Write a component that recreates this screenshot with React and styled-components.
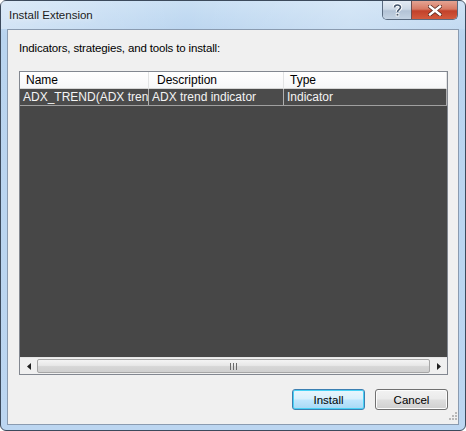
import styled, { createGlobalStyle } from 'styled-components';

const Global = createGlobalStyle`
  html, body {
    margin: 0;
    padding: 0;
    background: #ffffff;
  }
  * { box-sizing: border-box; }
`

const Window = styled.div`
  width: 466px;
  height: 431px;
  border: 1px solid #3c4a5c;
  border-radius: 6px;
  background: linear-gradient(180deg, #c9dff4 0%, #b9d4ef 8%, #bcd6f1 100%);
  display: flex;
  flex-direction: column;
  padding: 0 6px 5px 6px;
  font-family: "Liberation Sans", Arial, sans-serif;
`

const TitleBar = styled.div`
  height: 28px;
  display: flex;
  align-items: flex-start;
  background: linear-gradient(90deg, rgba(255,255,255,0.35) 0%, rgba(255,255,255,0) 40%, rgba(255,255,255,0.25) 75%, rgba(255,255,255,0.1) 100%);
  margin: 0 -6px;
  padding: 0 7px 0 8px;
`

const Title = styled.div`
  font-size: 11.5px;
  color: #1b1b1b;
  margin-top: 8px;
  text-shadow: 0 0 6px rgba(255,255,255,0.9);
`

const Caption = styled.div`
  margin-left: auto;
  display: flex;
  height: 19px;
  border: 1px solid #5a6b80;
  border-top: none;
  border-radius: 0 0 5px 5px;
  overflow: hidden;
`

const CapButton = styled.div`
  width: ${p => p.$w}px;
  display: flex;
  align-items: center;
  justify-content: center;
  background: ${p => p.$close
    ? 'linear-gradient(180deg, #e4a493 0%, #d77a64 45%, #c2412a 55%, #d35b3e 100%)'
    : 'linear-gradient(180deg, #e3ebf4 0%, #cdd9e6 45%, #b3c3d6 55%, #c4d3e3 100%)'};
  border-left: ${p => p.$close ? '1px solid #6e5050' : 'none'};
`

const Client = styled.div`
  flex: 1;
  border: 1px solid #8a9bb0;
  background: #f0f0f0;
  display: flex;
  flex-direction: column;
  padding: 11px 10px 0 11px;
`

const Label = styled.div`
  font-size: 11.5px;
  color: #000000;
  line-height: 15px;
  height: 15px;
  letter-spacing: -0.15px;
`

const ListBox = styled.div`
  margin-top: 15px;
  height: 304px;
  border: 1px solid #828790;
  background: #474747;
  display: flex;
  flex-direction: column;
  font-size: 12px;
`

const Columns = styled.div`
  display: grid;
  grid-template-columns: 129px 135px 1fr;
`

const Header = styled(Columns)`
  height: 17px;
  background: linear-gradient(180deg, #ffffff 0%, #f6f7f8 100%);
  border-bottom: 1px solid #d5d5d5;
  color: #000000;
`

const HeadCell = styled.div`
  padding-left: ${p => p.$pad}px;
  line-height: 17px;
  border-right: 1px solid #e2e3e4;
  white-space: nowrap;
`

const Row = styled(Columns)`
  height: 17px;
  background: #4b4b4b;
  border-bottom: 1px solid #a0a0a0;
  color: #f4f4f4;
`

const Cell = styled.div`
  padding-left: 3px;
  line-height: 16px;
  white-space: nowrap;
  overflow: hidden;
  text-overflow: clip;
  border-right: 1px solid #b0b0b0;
`

const Body = styled.div`
  flex: 1;
`

const HScroll = styled.div`
  height: 17px;
  display: flex;
  background: #f0f0f0;
  border-top: 1px solid #e6e6e6;
`

const Arrow = styled.div`
  width: 17px;
  display: flex;
  align-items: center;
  justify-content: center;
`

const Track = styled.div`
  flex: 1;
  display: flex;
  align-items: stretch;
  padding: 1px 0;
`

const Thumb = styled.div`
  flex: 1;
  border: 1px solid #a6a6a6;
  border-radius: 2px;
  background: linear-gradient(180deg, #f4f4f4 0%, #e8e8e8 45%, #d6d6d6 55%, #d0d0d0 100%);
  display: flex;
  align-items: center;
  justify-content: center;
`

const Footer = styled.div`
  display: flex;
  justify-content: flex-end;
  gap: 10px;
  margin-top: 14px;
`

const Button = styled.button`
  width: 73px;
  height: 21px;
  font-family: "Liberation Sans", Arial, sans-serif;
  font-size: 11.5px;
  color: #000000;
  border-radius: 3px;
  border: 1px solid ${p => p.$default ? '#3c7fb1' : '#707070'};
  background: ${p => p.$default
    ? 'linear-gradient(180deg, #eaf6fd 0%, #d9f0fc 45%, #bee6fd 55%, #a7d9f5 100%)'
    : 'linear-gradient(180deg, #f2f2f2 0%, #ebebeb 45%, #dddddd 55%, #cfcfcf 100%)'};
  box-shadow: inset 0 0 0 1px ${p => p.$default ? '#48d1f5' : '#fcfcfc'};
  padding: 0;
`

const Grip = styled.div`
  display: flex;
  justify-content: flex-end;
  margin-top: 2px;
  margin-right: -9px;
`

const Help = () => (
  <svg width="11" height="14" viewBox="0 0 11 14">
    <path d="M2.5 4.5 C2.5 1.2 8.5 1.2 8.5 4.3 C8.5 6.6 5.5 6.6 5.5 9" fill="none" stroke="#ffffff" strokeWidth="3.6" />
    <rect x="3.8" y="10" width="3.4" height="3.4" fill="#ffffff" />
    <path d="M2.5 4.5 C2.5 1.2 8.5 1.2 8.5 4.3 C8.5 6.6 5.5 6.6 5.5 9" fill="none" stroke="#46576d" strokeWidth="1.6" />
    <rect x="4.6" y="10.8" width="1.8" height="1.8" fill="#46576d" />
  </svg>
)

const CloseX = () => (
  <svg width="14" height="11" viewBox="0 0 14 11">
    <path d="M2 1.5 L12 9.5 M12 1.5 L2 9.5" stroke="#5a2a20" strokeWidth="4" strokeLinecap="square" />
    <path d="M2 1.5 L12 9.5 M12 1.5 L2 9.5" stroke="#ffffff" strokeWidth="2.4" strokeLinecap="square" />
  </svg>
)

const Tri = ({ dir }) => (
  <svg width="4" height="7" viewBox="0 0 4 7">
    {dir === 'left'
      ? <path d="M4 0 L0 3.5 L4 7 Z" fill="#202020" />
      : <path d="M0 0 L4 3.5 L0 7 Z" fill="#202020" />}
  </svg>
)

const GripLines = () => (
  <svg width="8" height="8" viewBox="0 0 8 8">
    {[[6,0],[3,3],[6,3],[0,6],[3,6],[6,6]].map(([x, y], i) => (
      <rect key={i} x={x} y={y} width="2" height="2" fill="#b8b8b8" />
    ))}
  </svg>
)

const ThumbGrip = () => (
  <svg width="7" height="7" viewBox="0 0 7 7">
    <rect x="0" y="0" width="1" height="7" fill="#6a6a6a" />
    <rect x="3" y="0" width="1" height="7" fill="#6a6a6a" />
    <rect x="6" y="0" width="1" height="7" fill="#6a6a6a" />
  </svg>
)

export default function App() {
  return (
    <>
      <Global />
      <Window>
        <TitleBar>
          <Title>Install Extension</Title>
          <Caption>
            <CapButton $w={28}><Help /></CapButton>
            <CapButton $w={46} $close><CloseX /></CapButton>
          </Caption>
        </TitleBar>
        <Client>
          <Label>Indicators, strategies, and tools to install:</Label>
          <ListBox>
            <Header>
              <HeadCell $pad={6}>Name</HeadCell>
              <HeadCell $pad={8}>Description</HeadCell>
              <HeadCell $pad={6}>Type</HeadCell>
            </Header>
            <Row>
              <Cell>ADX_TREND(ADX trend indicator)</Cell>
              <Cell>ADX trend indicator</Cell>
              <Cell>Indicator</Cell>
            </Row>
            <Body />
            <HScroll>
              <Arrow><Tri dir="left" /></Arrow>
              <Track>
                <Thumb><ThumbGrip /></Thumb>
              </Track>
              <Arrow><Tri dir="right" /></Arrow>
            </HScroll>
          </ListBox>
          <Footer>
            <Button $default>Install</Button>
            <Button>Cancel</Button>
          </Footer>
          <Grip><GripLines /></Grip>
        </Client>
      </Window>
    </>
  )
}
